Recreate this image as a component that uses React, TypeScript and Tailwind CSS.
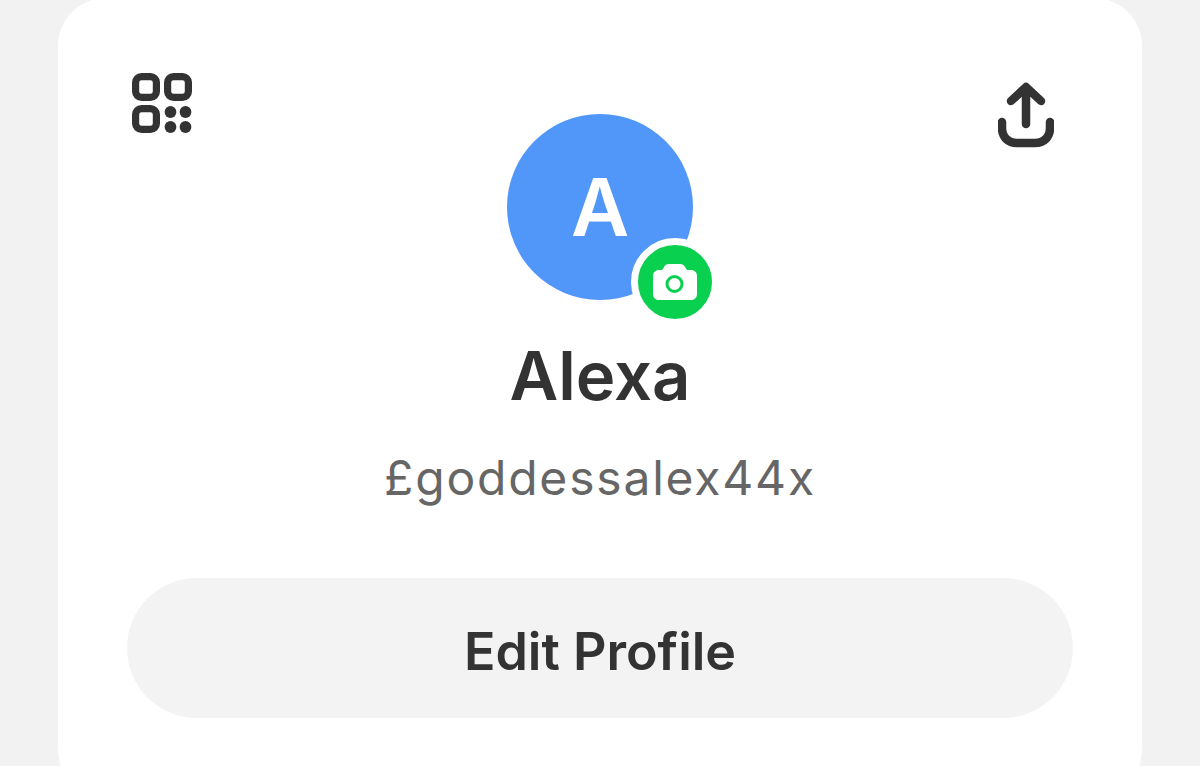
function QrIcon() {
  return (
    <svg viewBox="0 0 60 60" className="h-[60px] w-[60px]" fill="none" stroke="#333" strokeWidth="7.200">
      <rect x="3.600" y="3.600" width="20.800" height="20.800" rx="6" />
      <rect x="35.600" y="3.600" width="20.800" height="20.800" rx="6" />
      <rect x="3.600" y="35.600" width="20.800" height="20.800" rx="6" />
      <g fill="#333" stroke="none">
        <circle cx="38.500" cy="39" r="5.900" />
        <circle cx="53.500" cy="39" r="5.900" />
        <circle cx="38.500" cy="54" r="5.900" />
        <circle cx="53.500" cy="54" r="5.900" />
      </g>
    </svg>
  );
}

function ShareIcon() {
  return (
    <svg viewBox="0 0 56 66" className="h-[66px] w-[56px]" fill="none" stroke="#333" strokeWidth="8.500" strokeLinecap="round" strokeLinejoin="round">
      <path d="M28 42V5M13 19L28 5L43 19" />
      <path d="M4 40V46C4 55 10 61 19 61H37C46 61 52 55 52 46V40" />
    </svg>
  );
}

function CameraIcon() {
  return (
    <svg viewBox="0 0 44 36" className="h-[36px] w-[44px]">
      <path
        fill="#fff"
        d="M9 6L11 3C12 1 13.500 0 16 0H27C29.500 0 31 1 32 3L34 6H38C41.500 6 44 8.500 44 12V30C44 33.500 41.500 36 38 36H6C2.500 36 0 33.500 0 30V12C0 8.500 2.500 6 6 6Z"
      />
      <circle cx="21.500" cy="20" r="7.500" fill="none" stroke="#0ad04f" strokeWidth="3" />
    </svg>
  );
}

export default function App() {
  return (
    <div className="h-[766px] overflow-hidden bg-[#f2f2f2] px-[58px] font-['Inter',sans-serif] text-[#333]">
      <div className="-mt-[2px] h-[800px] rounded-[48px] bg-white px-[69px]">
        <div className="flex items-start justify-between pt-[75px]">
          <div className="ml-[5px]">
            <QrIcon />
          </div>
          <div className="mr-[19px] pt-[9px]">
            <ShareIcon />
          </div>
        </div>
        <div className="-mt-[34px] flex flex-col items-center">
          <div className="relative grid h-[186px] w-[186px] place-items-center rounded-full bg-[#5196f9]">
            <span className="text-[80px] font-semibold leading-none text-white">A</span>
            <div className="absolute -bottom-[26px] -right-[26px] grid h-[88px] w-[88px] place-items-center rounded-full border-[7px] border-white bg-[#0ad04f]">
              <CameraIcon />
            </div>
          </div>
          <h1 className="mt-[36px] text-[67px] font-semibold leading-[80px]">Alexa</h1>
          <p className="mt-[34px] text-[48px] font-normal leading-[56px] tracking-[1.8px] text-[#666]">£goddessalex44x</p>
        </div>
        <button className="mt-[72px] flex h-[140px] w-full items-center justify-center rounded-full bg-[#f3f3f3] pt-[7px] text-[52px] font-semibold text-[#333]">
          Edit Profile
        </button>
      </div>
    </div>
  );
}
